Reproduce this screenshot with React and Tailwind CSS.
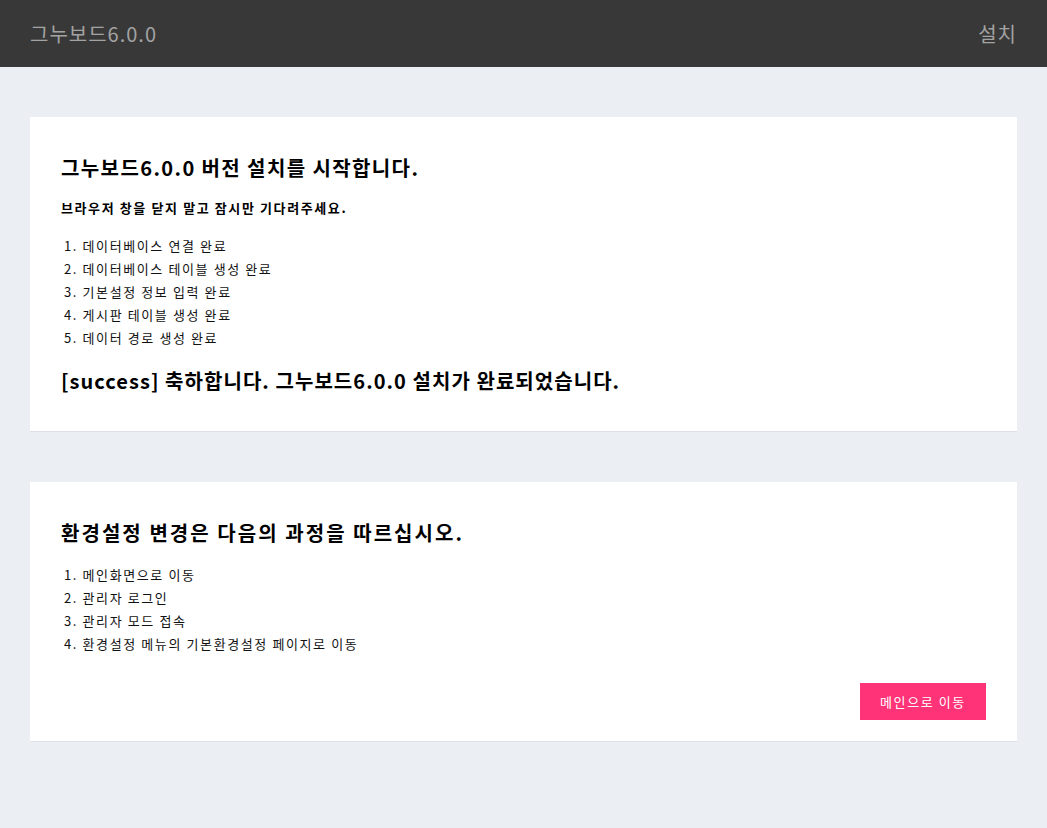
const font = { fontFamily: '"Noto Sans CJK KR", "Noto Sans", sans-serif' };

function Steps({ items }) {
  return (
    <ol className="pl-[3px] text-[13px] leading-[23px] tracking-[1.6px] text-[#111]">
      {items.map((t, i) => (
        <li key={i}>
          {i + 1}. {t}
        </li>
      ))}
    </ol>
  );
}

export default function App() {
  return (
    <div className="min-h-[828px] bg-[#ebeef3]" style={font}>
      <header className="flex h-[67px] items-center justify-between bg-[#383838] px-[30px] text-[20px] tracking-[1px] text-[#a3a3a3]">
        <div>그누보드6.0.0</div>
        <div>설치</div>
      </header>

      <main className="flex flex-col gap-[50px] px-[30px] pt-[50px]">
        <section className="border-b border-[#dde1e7] bg-white px-[31px] pt-[37px] pb-[36px]">
          <h1 className="text-[20px] leading-[28px] font-bold tracking-[1.4px] text-black">
            그누보드6.0.0 버전 설치를 시작합니다.
          </h1>
          <p className="mt-[16px] text-[13px] leading-[20px] font-bold tracking-[1.6px] text-black">
            브라우저 창을 닫지 말고 잠시만 기다려주세요.
          </p>
          <div className="mt-[16px]">
            <Steps
              items={[
                '데이터베이스 연결 완료',
                '데이터베이스 테이블 생성 완료',
                '기본설정 정보 입력 완료',
                '게시판 테이블 생성 완료',
                '데이터 경로 생성 완료',
              ]}
            />
          </div>
          <h2 className="mt-[18px] text-[20px] leading-[28px] font-bold tracking-[1.05px] text-black">
            [success] 축하합니다. 그누보드6.0.0 설치가 완료되었습니다.
          </h2>
        </section>

        <section className="border-b border-[#dde1e7] bg-white px-[31px] pt-[37px] pb-[21px]">
          <h2 className="text-[20px] leading-[28px] font-bold tracking-[2.05px] text-black">
            환경설정 변경은 다음의 과정을 따르십시오.
          </h2>
          <div className="mt-[16px]">
            <Steps
              items={[
                '메인화면으로 이동',
                '관리자 로그인',
                '관리자 모드 접속',
                '환경설정 메뉴의 기본환경설정 페이지로 이동',
              ]}
            />
          </div>
          <div className="mt-[28px] flex justify-end">
            <button className="h-[37px] w-[126px] bg-[#ff3377] text-[13px] tracking-[1.6px] text-white">
              메인으로 이동
            </button>
          </div>
        </section>
      </main>
    </div>
  );
}
